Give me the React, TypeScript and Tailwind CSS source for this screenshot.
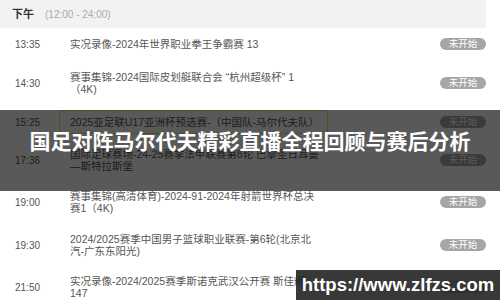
import React from "react";

type Row = { time: string; title: string; h: string; hl?: boolean };

const rows: Row[] = [
  { time: "13:35", title: "实况录像-2024年世界职业拳王争霸赛 13", h: "h-[32px]" },
  { time: "14:30", title: "赛事集锦-2024国际皮划艇联合会 “杭州超级杯” 1 （4K)", h: "h-[46px]" },
  { time: "15:25", title: "2025亚足联U17亚洲杯预选赛-（中国队-马尔代夫队）", h: "h-[32px]", hl: true },
  { time: "17:36", title: "国际足球赛场-24-25赛季法甲联赛第8轮 巴黎圣日耳曼—斯特拉斯堡", h: "h-[44px]" },
  { time: "19:00", title: "赛事集锦(高清体育)-2024-91-2024年射箭世界杯总决赛1（4K)", h: "h-[40px]" },
  { time: "19:30", title: "2024/2025赛季中国男子篮球职业联赛-第6轮(北京北汽-广东东阳光)", h: "h-[46px]" },
  { time: "21:50", title: "实况录像-2024/2025赛季斯诺克武汉公开赛 斯佳辉 147", h: "h-[38px]" },
];

export default function App() {
  return (
    <div
      className="relative w-[500px] h-[300px] overflow-hidden bg-white"
      style={{ fontFamily: '"Liberation Sans", "Noto Sans CJK SC", sans-serif' }}
    >
      <div className="w-[486px]">
        <div className="h-[28px] bg-[#f2f2f2] flex items-center pl-[12px]">
          <span className="text-[11px] font-bold text-[#333]">下午</span>
          <span className="ml-[11px] text-[10px] text-[#aaa]">(12:00 - 24:00)</span>
        </div>
        {rows.map((r) => (
          <div key={r.time} className={`flex items-center ${r.h}`}>
            <div className="w-[59px] pl-[15px] text-[10px] text-[#555]">{r.time}</div>
            <div
              className={`w-[269px] pl-[10px] pr-[7px] py-[5px] border text-[10.5px] leading-[12px] text-[#555] ${
                r.hl ? "border-[#e8e06a]" : "border-transparent"
              }`}
            >
              {r.title}
            </div>
            <div className="flex-1" />
            <div className="w-[46px] h-[12px] rounded-full bg-[#a6a6a6] text-white text-[9.5px] leading-[12px] text-center">
              未开始
            </div>
          </div>
        ))}
      </div>

      <div className="absolute left-0 top-[110px] w-[500px] h-[81px] bg-black/65 flex justify-center pt-[15px]">
        <span
          className="text-white font-bold text-[21px] leading-[30px]"
          style={{ fontFamily: '"Noto Sans CJK SC", sans-serif' }}
        >
          国足对阵马尔代夫精彩直播全程回顾与赛后分析
        </span>
      </div>

      <div className="absolute left-[296px] top-[270px] w-[204px] h-[30px] bg-[#222]/90 flex items-center justify-center">
        <span className="text-white font-bold text-[18.5px]" style={{ fontFamily: '"Liberation Sans", sans-serif' }}>
          https://www.zlfzs.com
        </span>
      </div>
    </div>
  );
}
